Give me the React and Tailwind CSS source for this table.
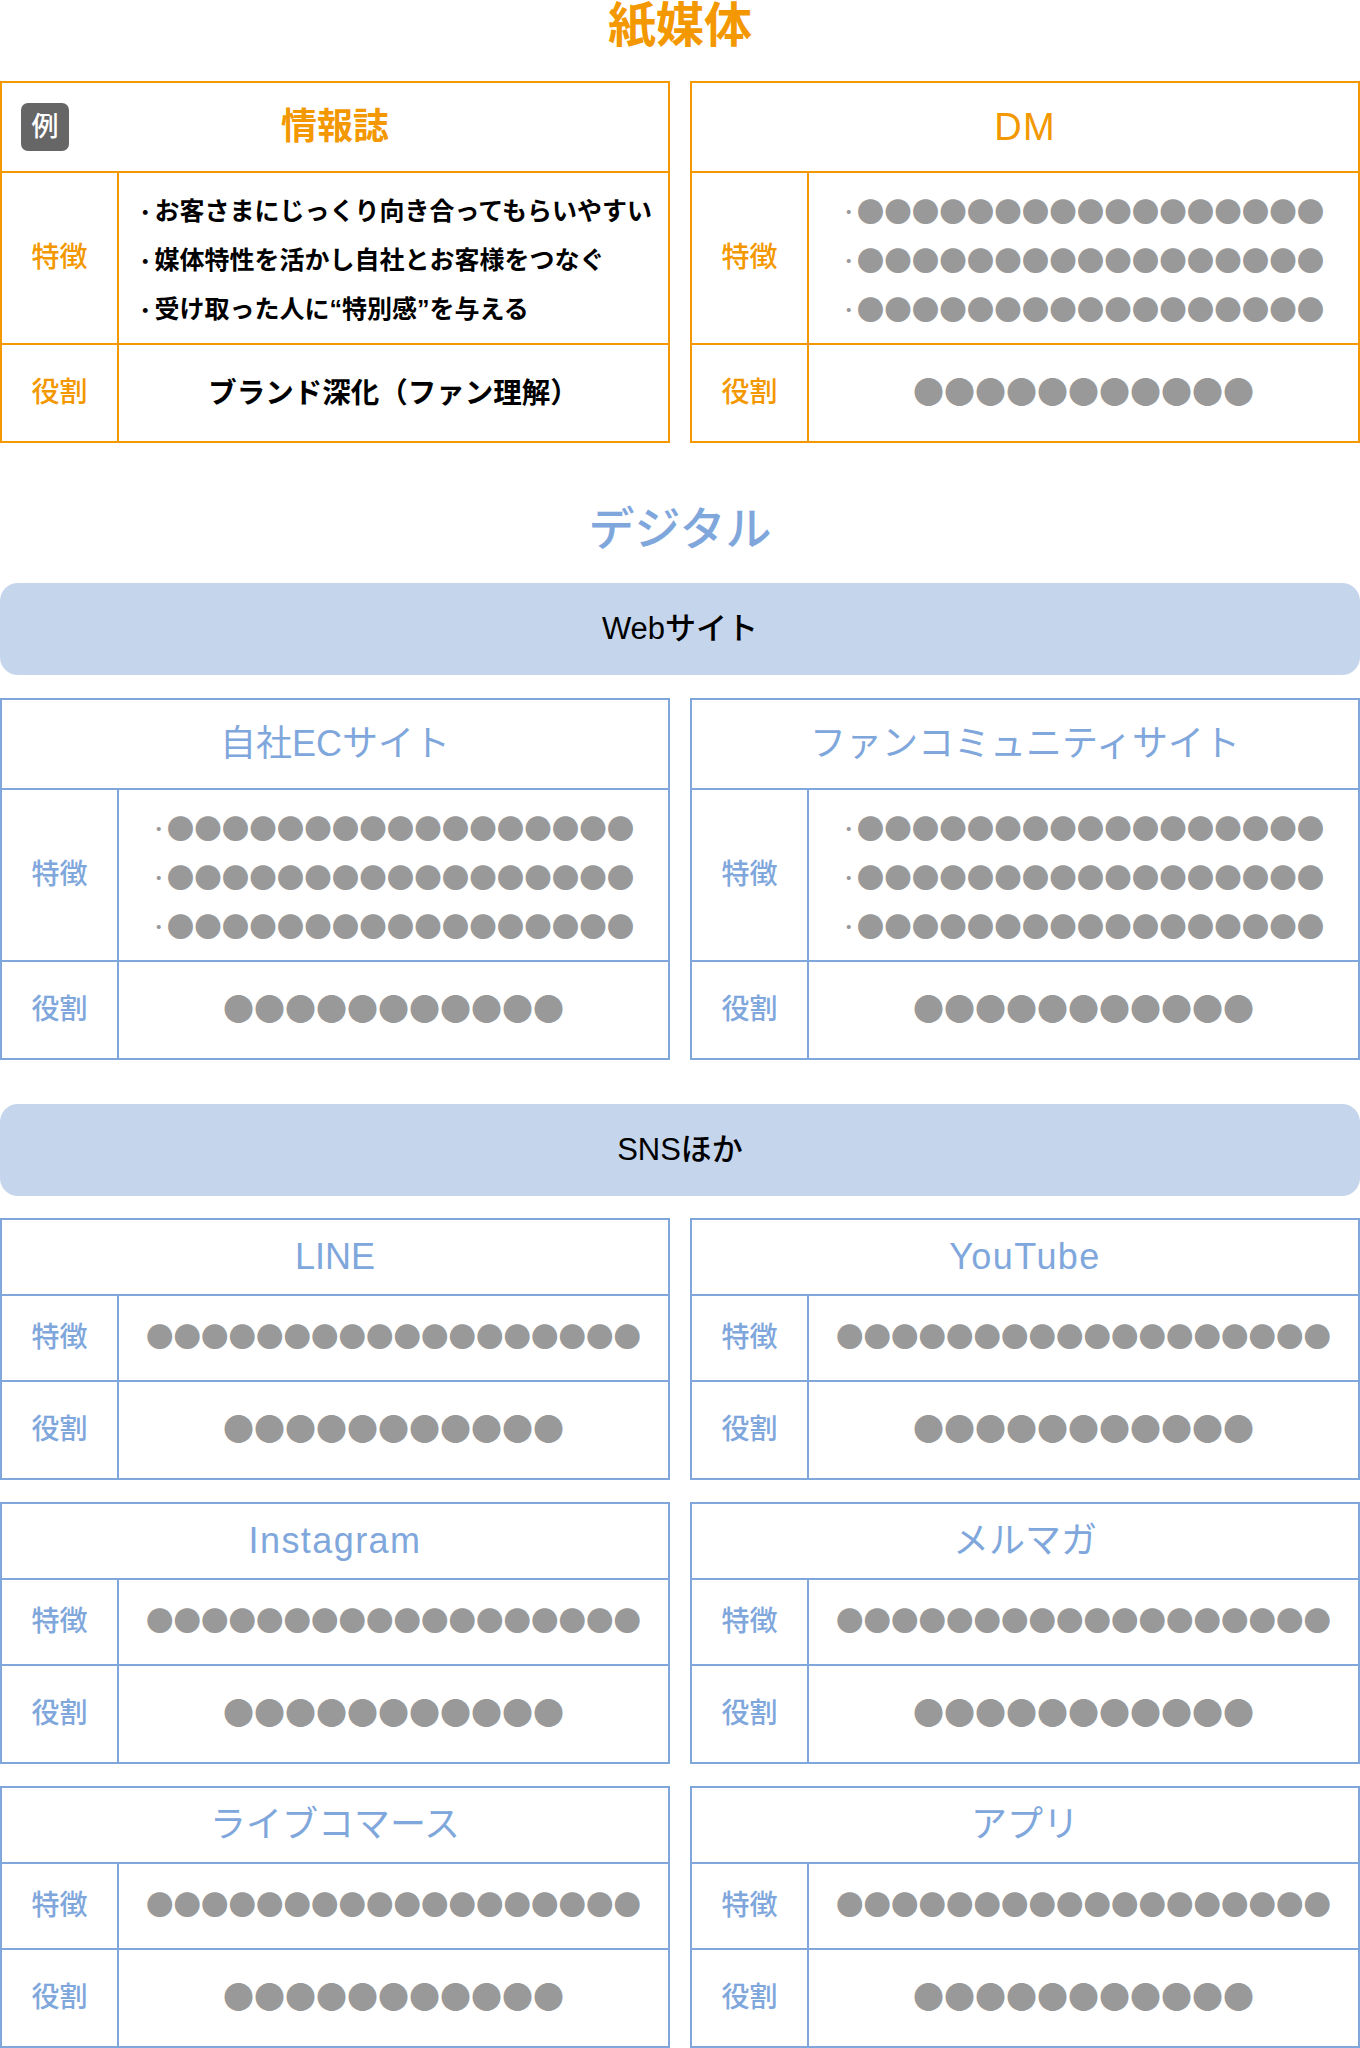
const themes = {
  orange: {
    border: 'border-[#f39800]',
    text: 'text-[#f39800]',
  },
  blue: {
    border: 'border-[#80a7dc]',
    text: 'text-[#80a7dc]',
  },
}

// heights include the 2px bottom border (border-box)
const sizes = {
  tall: { head: 'h-[90px]', feature: 'h-[172px]', role: 'h-[96px]' },
  short: { head: 'h-[76px]', feature: 'h-[86px]', role: 'h-[96px]' },
}

function Dots({ count, large, lift }) {
  let cls = "font-['Noto_Sans_CJK_JP'] text-[27.5px] leading-none text-[#999999] whitespace-nowrap"
  if (large) cls = "font-['Noto_Sans_CJK_JP'] text-[31px] leading-none text-[#999999] whitespace-nowrap pb-[7px]"
  else if (lift) cls = "font-['Noto_Sans_CJK_JP'] text-[27.5px] leading-none text-[#999999] whitespace-nowrap pb-[5px]"
  return <span className={cls}>{'●'.repeat(count)}</span>
}

function DotLines() {
  return (
    <div className="flex flex-col pt-[4px]">
      {[0, 1, 2].map((i) => (
        <div key={i} className="flex h-[49px] items-center">
          <span className="pr-[2px] font-['Noto_Sans_CJK_JP'] text-[24px] leading-none text-[#999999]">･</span>
          <Dots count={17} />
        </div>
      ))}
    </div>
  )
}

function TextLines({ lines }) {
  return (
    <div className="flex w-full flex-col pl-[20px] pt-[6px]">
      {lines.map((line) => (
        <div key={line} className="flex h-[49px] items-center text-[25px] font-semibold text-black whitespace-nowrap">
          <span className="pr-[3px] font-['Noto_Sans_CJK_JP']">･</span>
          <span>{line}</span>
        </div>
      ))}
    </div>
  )
}

function MediaTable({ theme, size = 'tall', title, badge, titleClass, feature, role }) {
  const t = themes[theme]
  const s = sizes[size]
  return (
    <div className={`border-2 ${t.border} bg-white`}>
      <div className={`relative flex items-center justify-center border-b-2 ${t.border} ${s.head}`}>
        {badge && (
          <span className="absolute left-[19px] top-1/2 flex h-[48px] w-[48px] -translate-y-1/2 items-center justify-center rounded-[7px] bg-[#666666] text-[27px] font-medium text-white">
            {badge}
          </span>
        )}
        <span className={`${titleClass} ${t.text}`}>{title}</span>
      </div>
      <div className={`flex border-b-2 ${t.border} ${s.feature}`}>
        <div className={`flex w-[117px] shrink-0 items-center justify-center border-r-2 ${t.border} text-[28px] font-medium ${t.text}`}>
          特徴
        </div>
        <div className="flex flex-1 items-center justify-center">{feature}</div>
      </div>
      <div className={`flex ${s.role}`}>
        <div className={`flex w-[117px] shrink-0 items-center justify-center border-r-2 ${t.border} text-[28px] font-medium ${t.text}`}>
          役割
        </div>
        <div className="flex flex-1 items-center justify-center">{role}</div>
      </div>
    </div>
  )
}

function GroupBar({ children }) {
  return (
    <div className="flex h-[92px] items-center justify-center rounded-[18px] bg-[#c5d5ec] text-[31px] font-medium text-black">
      {children}
    </div>
  )
}

const snsItems = [
  { name: 'LINE', cls: 'text-[36px] font-normal' },
  { name: 'YouTube', cls: 'text-[36px] font-normal tracking-[0.04em]' },
  { name: 'Instagram', cls: 'text-[36px] font-normal tracking-[0.04em]' },
  { name: 'メルマガ', cls: 'text-[36px] font-normal' },
  { name: 'ライブコマース', cls: 'text-[36px] font-normal' },
  { name: 'アプリ', cls: 'text-[36px] font-normal' },
]

export default function App() {
  return (
    <div className="w-[1360px] bg-white font-['Liberation_Sans','Noto_Sans_CJK_JP',sans-serif]">
      {/* 紙媒体 */}
      <h2 className="h-[52px] text-center text-[48px] font-bold leading-[52px] text-[#f39800]">紙媒体</h2>
      <div className="mt-[29px] grid grid-cols-2 gap-x-[20px]">
        <MediaTable
          theme="orange"
          title="情報誌"
          badge="例"
          titleClass="text-[36px] font-bold"
          feature={
            <TextLines
              lines={[
                'お客さまにじっくり向き合ってもらいやすい',
                '媒体特性を活かし自社とお客様をつなぐ',
                '受け取った人に“特別感”を与える',
              ]}
            />
          }
          role={<span className="text-[28.5px] font-semibold text-black">ブランド深化（ファン理解）</span>}
        />
        <MediaTable
          theme="orange"
          title="DM"
          titleClass="text-[38px] font-normal tracking-[0.03em]"
          feature={<DotLines />}
          role={<Dots count={11} large />}
        />
      </div>

      {/* デジタル */}
      <h2 className="mt-[60px] h-[52px] text-center text-[46px] font-medium leading-[52px] text-[#80a7dc]">デジタル</h2>
      <div className="mt-[28px]">
        <GroupBar>Webサイト</GroupBar>
      </div>
      <div className="mt-[23px] grid grid-cols-2 gap-x-[20px]">
        <MediaTable
          theme="blue"
          title="自社ECサイト"
          titleClass="text-[36px] font-normal"
          feature={<DotLines />}
          role={<Dots count={11} large />}
        />
        <MediaTable
          theme="blue"
          title="ファンコミュニティサイト"
          titleClass="text-[36px] font-normal"
          feature={<DotLines />}
          role={<Dots count={11} large />}
        />
      </div>

      <div className="mt-[44px]">
        <GroupBar>SNSほか</GroupBar>
      </div>
      <div className="mt-[22px] grid grid-cols-2 gap-x-[20px] gap-y-[22px]">
        {snsItems.map((item) => (
          <MediaTable
            key={item.name}
            theme="blue"
            size="short"
            title={item.name}
            titleClass={item.cls}
            feature={<Dots count={18} lift />}
            role={<Dots count={11} large />}
          />
        ))}
      </div>
    </div>
  )
}
